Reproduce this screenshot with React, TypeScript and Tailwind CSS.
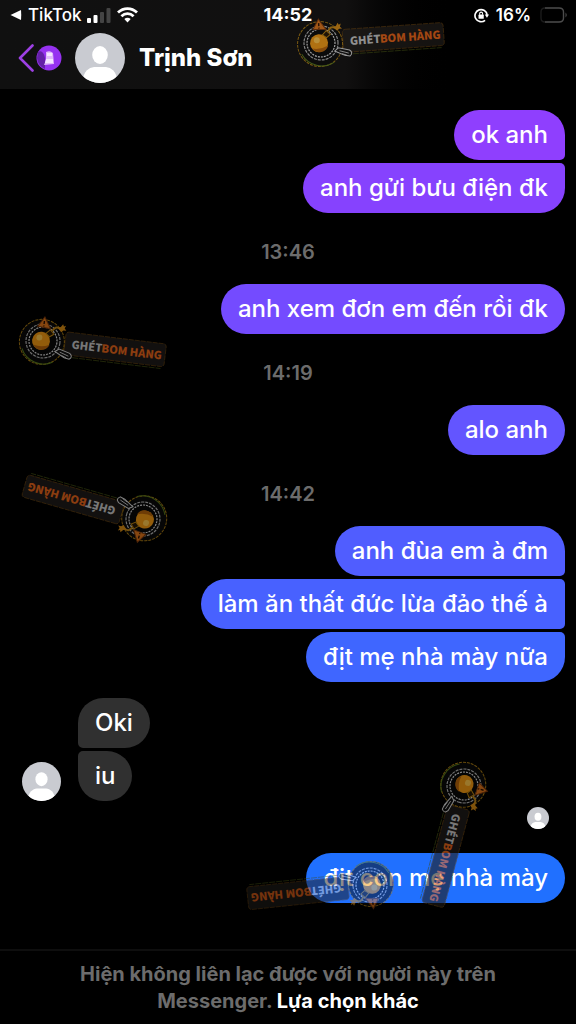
import type { ReactNode } from "react";

type Corner = "single" | "first" | "middle" | "last";

interface Message {
  text: string;
  tone: string;
  corner: Corner;
}

interface Group {
  time?: string;
  messages: Message[];
}

const groups: Group[] = [
  {
    messages: [
      { text: "ok anh", tone: "bg-[#8f3ffe]", corner: "first" },
      { text: "anh gửi bưu điện đk", tone: "bg-[#8642fe]", corner: "last" },
    ],
  },
  {
    time: "13:46",
    messages: [{ text: "anh xem đơn em đến rồi đk", tone: "bg-[#744bff]", corner: "single" }],
  },
  {
    time: "14:19",
    messages: [{ text: "alo anh", tone: "bg-[#6355ff]", corner: "single" }],
  },
  {
    time: "14:42",
    messages: [
      { text: "anh đùa em à đm", tone: "bg-[#505dff]", corner: "first" },
      { text: "làm ăn thất đức lừa đảo thế à", tone: "bg-[#4861ff]", corner: "middle" },
      { text: "địt mẹ nhà mày nữa", tone: "bg-[#3f66ff]", corner: "last" },
    ],
  },
];

const sentCorners: Record<Corner, string> = {
  single: "rounded-[25px]",
  first: "rounded-[25px] rounded-br-[5px]",
  middle: "rounded-[25px] rounded-r-[5px]",
  last: "rounded-[25px] rounded-tr-[5px]",
};

function Bubble({ className, children }: { className: string; children: ReactNode }) {
  return (
    <p className={`flex min-h-[50px] items-center px-[17px] text-2xl font-medium ${className}`}>
      {children}
    </p>
  );
}

function Avatar({ className }: { className: string }) {
  return (
    <svg viewBox="0 0 50 50" className={`shrink-0 rounded-full ${className}`} aria-hidden="true">
      <rect width="50" height="50" fill="#c9cbd1" />
      <ellipse cx="25" cy="22" rx="7.8" ry="9" fill="#fff" />
      <path d="M8 45 C10 36 16 34 21 34 H29 C34 34 40 36 42 45 Q35 51 25 51 Q15 51 8 45Z" fill="#fff" />
    </svg>
  );
}

function Stamp({ place, angle, strength }: { place: string; angle: number; strength: string }) {
  return (
    <svg className={`pointer-events-none absolute h-px w-px overflow-visible ${place} ${strength}`}>
      <g transform={`rotate(${angle})`}>
        <rect x="22" y="-12" width="101" height="23" rx="3" fill="#1f1c19" stroke="#5a3a10" strokeWidth=".8" strokeDasharray="5 1" />
        <path d="M24 13 H120" stroke="#3f4a12" strokeWidth=".8" strokeDasharray="6 1" />
        <circle r="22.5" cx="-1" cy="1" fill="#0b0b0b" stroke="#a87a14" strokeWidth="1" strokeDasharray="3 1" />
        <path d="M-20 10 A23 23 0 0 0 12 20" fill="none" stroke="#5c7d1d" />
        <circle r="17" fill="none" stroke="#b5b5b5" strokeWidth="1.2" strokeDasharray="3 1" />
        <circle r="14" fill="#090909" stroke="#dedede" strokeWidth="1.2" strokeDasharray="2 1" />
        <path d="M13 9 L17 6 L28 9 Q32 12 28 15 L23 14Z" fill="#111" stroke="#d5d5d5" strokeWidth="1" />
        <path d="M18 9 L27 12 M20 12 L25 14" stroke="#ddd" strokeWidth=".8" />
        <circle r="9" cx="-2" cy="0" fill="#f39a13" />
        <path d="M-9 5 A9 9 0 0 0 7 3 Q-1 7 -9 5Z" fill="#b8650a" />
        <circle r="3" cx="-4" cy="-3" fill="#ffc64b" />
        <path d="M2 -8 L6 -12 L10 -8 L6 -5Z" fill="#251704" stroke="#bd8410" />
        <path d="M8 -11 Q10 -17 16 -14" fill="none" stroke="#b98218" strokeWidth="2" />
        <path d="M18 -19 L19 -17 L21 -18 L20 -15 L22 -13 L19 -13 L17 -11 L15 -13 L13 -15 L16 -16Z" fill="#d58a13" />
        <path d="M-1 -24 L6 -13 L-7 -14Z" fill="#df751b" stroke="#7c3a0c" />
        <path d="M-1 -20 V-17 M-1 -15.5 V-14.5" stroke="#2a1000" strokeWidth="1.4" />
        <text x="29" y="4" className="font-['Noto_Sans_CJK_SC',sans-serif] text-[11px] font-black" fill="#c7c7c7">GHÉT</text>
        <text x="59" y="4" className="font-['Noto_Sans_CJK_SC',sans-serif] text-[11px] font-black" fill="#e8661a">BOM HÀNG</text>
      </g>
    </svg>
  );
}

function StatusBar() {
  return (
    <div className="grid h-[30px] grid-cols-[1fr_auto_1fr] items-center px-2 text-lg font-bold leading-none">
      <div className="flex items-center gap-1.5 pl-0.5">
        <svg viewBox="0 0 12 12" className="h-3 w-3" fill="#fff" aria-hidden="true">
          <path d="M.5 6 L11 1 Q11.5 6 11 11Z" />
        </svg>
        <span className="text-[17px] font-medium">TikTok</span>
        <svg viewBox="0 0 24 15" className="h-[15px] w-6" aria-label="Signal">
          <rect x="0" y="10" width="4" height="5" rx="1" fill="#fff" />
          <rect x="6.5" y="7" width="4" height="8" rx="1" fill="#fff" />
          <rect x="13" y="4" width="4" height="11" rx="1" fill="#444" />
          <rect x="19.5" y="0" width="4" height="15" rx="1" fill="#444" />
        </svg>
        <svg viewBox="0 0 21 16" className="h-4 w-[21px]" fill="none" stroke="#fff" strokeWidth="2.8" aria-label="Wi-Fi">
          <path d="M1 5.6 C6.5 .2 14.5 .2 20 5.6" />
          <path d="M4.4 9.2 C8 5.8 13 5.8 16.6 9.2" />
          <path d="M10.5 15.6 L7.3 12.1 Q10.5 9.6 13.7 12.1Z" fill="#fff" stroke="none" />
        </svg>
      </div>
      <time>14:52</time>
      <div className="flex items-center justify-end gap-[7px]">
        <svg viewBox="0 0 16 16" className="h-[15px] w-[15px]" fill="none" stroke="#fff" aria-label="Rotation lock">
          <path d="M11.8 13.1 A6.5 6.5 0 1 1 14 7.4" strokeWidth="1.8" />
          <path d="M11.5 7 H16 L13.8 10.5Z" fill="#fff" stroke="none" />
          <rect x="4.8" y="7" width="5.6" height="4.4" rx=".6" fill="#fff" stroke="none" />
          <path d="M6 7.2 V6 A1.6 1.6 0 0 1 9.2 6 V7.2" strokeWidth="1.1" />
        </svg>
        <span className="text-[17px] font-semibold">16%</span>
        <svg viewBox="0 0 28 16" className="ml-0.5 h-4 w-7" fill="none" aria-label="Battery">
          <path d="M5 1 H19 Q23.500 1 23.500 5 V11 Q23.500 15 19 15 H5" stroke="#4c4c4c" strokeWidth="1.4" />
          <path d="M5 1 Q1 1 1 5 V11 Q1 15 5 15" stroke="#1b1b1b" strokeWidth="1.4" />
          <path d="M25.500 5.500 Q28 8 25.500 10.500Z" fill="#4c4c4c" />
        </svg>
      </div>
    </div>
  );
}

export default function App() {
  return (
    <div className="relative flex min-h-screen flex-col overflow-hidden bg-black font-[Inter,sans-serif] text-white">
      <header className="bg-linear-to-r from-[#101010] via-[#111010] via-60% to-black to-80% pb-[3px]">
        <StatusBar />
        <div className="flex h-14 items-center pl-[18px]">
          <button type="button" aria-label="Back" className="flex items-center gap-0.5">
            <svg viewBox="0 0 16 28" className="h-7 w-4" fill="none" stroke="#9d40e4" strokeWidth="2.6" strokeLinecap="round" strokeLinejoin="round">
              <path d="M14.500 1.500 L2 14 L14.500 26.500" />
            </svg>
            <svg viewBox="0 0 26 26" className="h-[26px] w-[26px]">
              <circle cx="13" cy="13" r="12.500" fill="#9632f0" />
              <path d="M2 7 Q7 4 9 13 V24 Q2 21 1 13Z" fill="#6420a7" />
              <path d="M10 7 Q14 5 17 8 L18 19 L8 20 L10 15Z" fill="#dfb9fa" />
              <path d="M11 8 H16 V11 H11Z M10 14 H17 V18 H9Z" fill="#f4e5ff" />
            </svg>
          </button>
          <Avatar className="ml-[13px] h-[50px] w-[50px]" />
          <h1 className="ml-[14px] text-2xl font-extrabold">Trịnh Sơn</h1>
        </div>
      </header>

      <main className="flex grow flex-col pr-[11px] pt-[21px]">
        {groups.map((group, index) => (
          <section key={index}>
            {group.time && (
              <div className="-mr-[11px] flex h-[71px] items-center justify-center pt-1.5 text-xl font-semibold text-[#6c6c6c]">
                <time>{group.time}</time>
              </div>
            )}
            <div className="flex flex-col items-end gap-[3px]">
              {group.messages.map((message) => (
                <Bubble key={message.text} className={`${message.tone} ${sentCorners[message.corner]}`}>
                  {message.text}
                </Bubble>
              ))}
            </div>
          </section>
        ))}

        <section className="mt-4 flex items-end gap-[17px] pl-[22px]">
          <Avatar className="h-[39px] w-[39px]" />
          <div className="flex flex-col items-start gap-[3px]">
            <Bubble className="rounded-[25px] rounded-bl-[5px] bg-[#303030]">Oki</Bubble>
            <Bubble className="rounded-[25px] rounded-tl-[5px] bg-[#303030]">iu</Bubble>
          </div>
        </section>

        <section className="mt-1.5 flex flex-col items-end gap-6">
          <Avatar className="mr-4 h-[22px] w-[22px]" />
          <Bubble className="rounded-[25px] bg-[#2070ff]">địt con mẹ nhà mày</Bubble>
        </section>
      </main>

      <footer className="border-t-2 border-[#0e0e0e] px-16 pb-[9px] pt-2.5 text-center text-xl font-bold leading-[27px] text-[#6c6c6c]">
        <span>Hiện không liên lạc được với người này trên</span>{" "}
        <span>Messenger.</span>{" "}
        <a href="#options" className="text-white">Lựa chọn khác</a>
      </footer>

      <Stamp place="left-[321px] top-[43px]" angle={-4} strength="opacity-70" />
      <Stamp place="left-[43px] top-[341px]" angle={7} strength="opacity-60" />
      <Stamp place="left-[143px] top-[519px]" angle={196} strength="opacity-60" />
      <Stamp place="left-[464px] top-[786px]" angle={105} strength="opacity-60" />
      <Stamp place="left-[370px] top-[885px]" angle={174} strength="opacity-50" />
    </div>
  );
}
